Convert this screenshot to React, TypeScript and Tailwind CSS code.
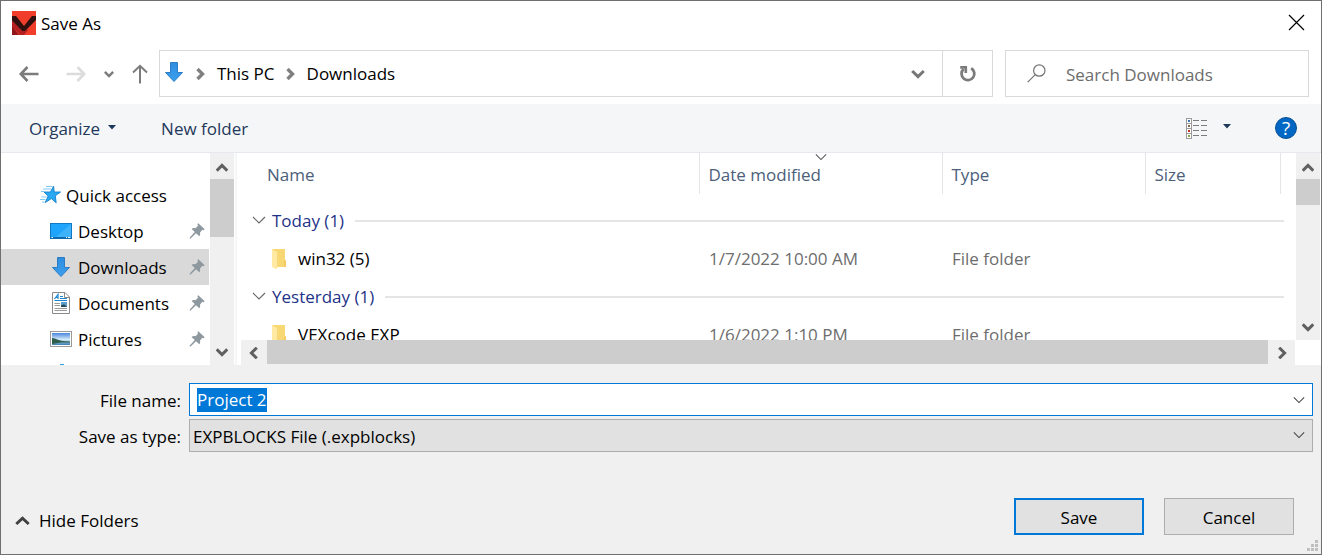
import { useEffect, useRef, type ReactNode } from "react";

type IconProps = { className?: string };

function AppLogo() {
  return (
    <svg width="24" height="24" viewBox="0 0 24 24" aria-hidden="true">
      <rect width="24" height="24" fill="#f03e2b" />
      <path d="M0 10L12 20L17 18L12 24H8L0 15Z" fill="#b3201f" />
      <path d="M0 15L7 24H0Z" fill="#8f161a" />
      <path d="M0 5H4L12 15L20 5H24V9L13 20H10.5L0 9.5Z" fill="#2f100e" />
    </svg>
  );
}

function DownArrow({ className }: IconProps) {
  return (
    <svg className={className} width="20" height="20" viewBox="0 0 20 20" aria-hidden="true">
      <defs>
        <linearGradient id="arrowBlue" x1="0" y1="0" x2="0" y2="1">
          <stop offset="0" stopColor="#2f8de0" />
          <stop offset="1" stopColor="#3d9fee" />
        </linearGradient>
      </defs>
      <path d="M6.5 0.5H13.5V10.5H18.5L10 19.5L1.5 10.5H6.5Z" fill="url(#arrowBlue)" stroke="#2b7cc4" />
    </svg>
  );
}

function Chevron({ className }: IconProps) {
  return (
    <svg className={className} width="12" height="12" viewBox="0 0 12 12" fill="none" stroke="currentColor" aria-hidden="true">
      <path d="M1 3.5L6 8.5L11 3.5" />
    </svg>
  );
}

function ThinChevron({ className }: IconProps) {
  return (
    <svg className={className} width="14" height="8" viewBox="0 0 14 8" fill="none" stroke="currentColor" strokeWidth="1.2" aria-hidden="true">
      <path d="M1 1L7 7L13 1" />
    </svg>
  );
}

function Caret({ className }: IconProps) {
  return (
    <svg className={className} width="8" height="5" viewBox="0 0 8 5" fill="#1e395b" aria-hidden="true">
      <path d="M0 0H8L4 4.6Z" />
    </svg>
  );
}

function ArrowLeft({ className }: IconProps) {
  return (
    <svg className={className} width="20" height="16" viewBox="0 0 20 16" fill="none" stroke="currentColor" strokeWidth="2.6" aria-hidden="true">
      <path d="M8.5 1L1.8 8L8.5 15M2 8H19.5" />
    </svg>
  );
}

function Pin() {
  return (
    <svg width="16" height="16" viewBox="0 0 16 16" fill="#8d989f" aria-hidden="true">
      <path d="M9.3 0.3L15.7 6.2L14.6 7.2L13.4 6.8L11 9.5C11.4 11.2 11.1 12.4 10.3 13.3L7 10.2L1.6 15.4L0.6 15.6L0.8 14.6L5.8 9L2.6 6C3.6 5 5 4.7 6.6 5.2L9.1 2.6L8.4 1.3Z" />
    </svg>
  );
}

function StarIcon() {
  return (
    <svg width="22" height="20" viewBox="0 0 22 20" aria-hidden="true">
      <path d="M13.6 1.2L14.2 7H20.6L15.3 10.8L16.2 17.8L11.4 13.6L5.2 17.6L8.2 11L4 7H10.4Z" fill="#29a9f2" stroke="#1580cf" strokeWidth="0.9" />
      <path d="M6 1.5H12.5M3 4H11M1 6.5H4M1.5 12H6.5M0 14.5H5.5M2 17H4.5" stroke="#6cc3f4" strokeWidth="0.9" />
    </svg>
  );
}

function DesktopIcon() {
  return (
    <svg width="22" height="16" viewBox="0 0 22 16" aria-hidden="true">
      <rect x="0.5" y="0.5" width="21" height="15" fill="#1ea4fb" stroke="#0f79c4" />
      <path d="M21 1L6 14H21Z" fill="#3fb2fc" />
      <rect x="0" y="14" width="22" height="2" fill="#0e6bb0" />
      <path d="M1.5 14.5H3M16 14.5H17M18 14.5H20.5" stroke="#fff" />
    </svg>
  );
}

function DocumentIcon() {
  return (
    <svg width="18" height="22" viewBox="0 0 18 22" fill="none" aria-hidden="true">
      <path d="M0.5 0.5H13L17.5 5V21.5H0.5Z" fill="#fff" stroke="#8a8a8a" />
      <path d="M12.5 0.5V5.5H17.5" stroke="#8a8a8a" />
      <path d="M2.5 7L6 2.5V7M4 5.5H6" stroke="#1c86d1" strokeWidth="1.2" />
      <path d="M8 4.5H11M8 6.5H15M2.5 8.5H15" stroke="#1c86d1" />
      <path d="M2.5 11.5H8M2.5 13.5H8M2.5 16.5H15M2.5 18.5H15" stroke="#9a9a9a" />
      <rect x="9" y="10" width="6" height="5" fill="#5f9fce" />
      <path d="M9 15V13.5L12 12.3L15 15Z" fill="#224c56" />
    </svg>
  );
}

function PictureIcon() {
  return (
    <svg width="22" height="16" viewBox="0 0 22 16" aria-hidden="true">
      <defs>
        <linearGradient id="sky" x1="0" y1="0" x2="0" y2="1">
          <stop offset="0" stopColor="#4a86dc" />
          <stop offset="0.55" stopColor="#d7ecfa" />
          <stop offset="0.75" stopColor="#7fb2d6" />
          <stop offset="1" stopColor="#3f7fb0" />
        </linearGradient>
      </defs>
      <rect x="0.5" y="0.5" width="21" height="15" fill="#fff" stroke="#9a9a9a" />
      <rect x="2" y="2" width="18" height="12" fill="url(#sky)" />
      <path d="M2 7C6 7 8 10 15 10.2L20 10.5V11.5H11L2 13Z" fill="#2f5d4c" />
    </svg>
  );
}

function FolderIcon() {
  return (
    <svg width="14" height="21" viewBox="0 0 14 21" aria-hidden="true">
      <path d="M0.5 0H13V11H14V18H0.5Z" fill="#f8d775" />
      <path d="M0 0.5L5 3V20.5L0 18Z" fill="#ffe9a3" />
      <path d="M12 12H14V18H12Z" fill="#f3cb62" />
    </svg>
  );
}

function ViewIcon() {
  const dots = ["#3f74b5", "#8a6a4a", "#c93030", "#86ad49"];
  return (
    <svg width="22" height="21" viewBox="0 0 22 21" fill="none" aria-hidden="true">
      {dots.map((fill, i) => (
        <g key={fill}>
          <rect x="0.5" y={0.5 + i * 5} width="5" height="5" fill="#fff" stroke="#9b9b9b" />
          <rect x="2" y={2 + i * 5} width="2" height="2" fill={fill} />
          <path d={`M7 ${2.5 + i * 5}H13M15 ${2.5 + i * 5}H21`} stroke="#7d7d7d" />
        </g>
      ))}
    </svg>
  );
}

function ScrollChevron({ className }: IconProps) {
  return (
    <svg className={className} width="12" height="10" viewBox="0 0 12 10" fill="none" stroke="#606060" strokeWidth="3" aria-hidden="true">
      <path d="M0.7 7.8L6 2.4L11.3 7.8" />
    </svg>
  );
}

function VerticalScroll({ thumb }: { thumb: string }) {
  return (
    <div className="flex w-6 shrink-0 flex-col bg-[#f0f0f0]">
      <button aria-label="Scroll up" className="flex h-[26px] items-center justify-center pt-1">
        <ScrollChevron />
      </button>
      <div className={`bg-[#cdcdcd] ${thumb}`} />
      <button aria-label="Scroll down" className="mt-auto flex h-[26px] items-center justify-center">
        <ScrollChevron className="rotate-180" />
      </button>
    </div>
  );
}

const places: { name: string; icon: ReactNode; active?: boolean }[] = [
  { name: "Desktop", icon: <DesktopIcon /> },
  { name: "Downloads", icon: <DownArrow />, active: true },
  { name: "Documents", icon: <DocumentIcon /> },
  { name: "Pictures", icon: <PictureIcon /> },
];

const groups = [
  { label: "Today (1)", files: [{ name: "win32 (5)", date: "1/7/2022 10:00 AM", type: "File folder" }] },
  { label: "Yesterday (1)", files: [{ name: "VEXcode EXP", date: "1/6/2022 1:10 PM", type: "File folder" }] },
];

function Sidebar() {
  return (
    <aside className="flex w-[233px] shrink-0">
      <nav aria-label="Places" className="min-w-0 flex-1 overflow-hidden pt-6">
        <a href="#quick" className="flex h-9 items-center gap-1 pl-[39px]">
          <StarIcon />
          <span className="pt-0.5">Quick access</span>
        </a>
        {places.map((p) => (
          <a
            key={p.name}
            href={`#${p.name.toLowerCase()}`}
            className={`mr-px flex h-9 items-center pr-1 pl-[49px] ${p.active ? "bg-[#d9d9d9]" : ""}`}
          >
            <span className="flex w-[22px] justify-center">{p.icon}</span>
            <span className="flex-1 pt-0.5 pl-1.5">{p.name}</span>
            <Pin />
          </a>
        ))}
        <div className="flex pt-[7px] pl-[59px]">
          <span className="h-4 w-1 bg-[#29a0e0]" />
        </div>
      </nav>
      <VerticalScroll thumb="h-[58px]" />
    </aside>
  );
}

function FileTable() {
  return (
    <table className="w-full table-fixed border-collapse text-left">
      <colgroup>
        <col />
        <col className="w-[243px]" />
        <col className="w-[203px]" />
        <col className="w-[135px]" />
        <col className="w-4" />
      </colgroup>
      <thead>
        <tr className="h-[41px] text-[#4c607a]">
          <th className="border-r border-[#e5e5e5] pt-0.5 pl-7 font-normal">Name</th>
          <th className="relative border-r border-[#e5e5e5] pt-0.5 pl-[9px] font-normal">
            <ThinChevron className="absolute top-0 left-1/2 w-3 -translate-x-1/2 text-[#555]" />
            Date modified
          </th>
          <th className="border-r border-[#e5e5e5] pt-0.5 pl-[9px] font-normal">Type</th>
          <th className="border-r border-[#e5e5e5] pt-0.5 pl-[9px] font-normal">Size</th>
          <td />
        </tr>
      </thead>
      {groups.map((g, i) => (
        <tbody key={g.label}>
          {i === 0 && <tr className="h-2" />}
          <tr className="h-[38px]">
            <th colSpan={5} className="pr-3 pl-[13px] font-normal text-[#1e3287]">
              <div className="flex items-center">
                <ThinChevron className="mr-1.5 mb-[3px] text-[#6b6b6b]" />
                {g.label}
                <span className="ml-[11px] h-0.5 flex-1 bg-[#e5e5e5]" />
              </div>
            </th>
          </tr>
          {g.files.map((f) => (
            <tr key={f.name} className="h-[38px] text-[#6d6d6d]">
              <td className="pl-[33px] text-black">
                <div className="flex items-center gap-3">
                  <FolderIcon />
                  {f.name}
                </div>
              </td>
              <td className="pl-[10px]">{f.date}</td>
              <td className="pl-[10px]">{f.type}</td>
              <td />
              <td />
            </tr>
          ))}
        </tbody>
      ))}
    </table>
  );
}

export default function App() {
  const nameRef = useRef<HTMLInputElement>(null);

  useEffect(() => {
    nameRef.current?.focus();
    nameRef.current?.select();
  }, []);

  return (
    <div className="flex h-screen min-h-[480px] flex-col border border-[#6f6f6f] bg-white font-['Open_Sans','Noto_Sans',sans-serif] text-[17px] leading-6 text-black">
      <header className="flex h-[49px] shrink-0 items-start justify-between pr-4 pl-[11px]">
        <div className="flex items-center gap-[5px] pt-[9px]">
          <AppLogo />
          <h1 className="pt-0.5">Save As</h1>
        </div>
        <button aria-label="Close" className="pt-[13px]">
          <svg width="17" height="17" viewBox="0 0 17 17" stroke="#000" strokeWidth="1.2" aria-hidden="true">
            <path d="M1 1L16 16M16 1L1 16" />
          </svg>
        </button>
      </header>

      <div className="flex h-[54px] shrink-0 items-start pr-3 pl-[18px]">
        <div className="flex h-[47px] w-[140px] shrink-0 items-center text-[#7c7c7c]">
          <button aria-label="Back">
            <ArrowLeft />
          </button>
          <button aria-label="Forward" className="ml-[27px] text-[#dcdcdc]">
            <ArrowLeft className="rotate-180" />
          </button>
          <button aria-label="Recent locations" className="ml-[18px]">
            <Chevron className="w-[10px] stroke-3" />
          </button>
          <button aria-label="Up" className="ml-4">
            <ArrowLeft className="w-[20px] rotate-90 stroke-2" />
          </button>
        </div>
        <div className="flex h-[47px] min-w-0 flex-1 border border-[#d9d9d9]">
          <nav aria-label="Address" className="flex flex-1 items-center pl-1">
            <DownArrow className="-mt-1" />
            <Chevron className="ml-[10px] -rotate-90 stroke-[3.4] text-[#808080]" />
            <a href="#pc" className="ml-[11px]">This PC</a>
            <Chevron className="mr-[11px] ml-[9px] -rotate-90 stroke-[3.4] text-[#808080]" />
            <a href="#downloads">Downloads</a>
          </nav>
          <button aria-label="Previous locations" className="flex w-12 items-center justify-center text-[#777]">
            <svg width="14" height="10" viewBox="0 0 14 10" fill="none" stroke="currentColor" strokeWidth="3" aria-hidden="true">
              <path d="M1.2 2L7 7.6L12.8 2" />
            </svg>
          </button>
          <button aria-label="Refresh" className="flex w-[50px] items-center justify-center border-l border-[#d9d9d9]">
            <svg width="18" height="18" viewBox="0 0 18 18" fill="none" stroke="#7c7c7c" strokeWidth="2.8" aria-hidden="true">
              <path d="M12.2 3.2A6.4 6.4 0 1 1 4.6 4" />
              <path d="M1.2 2.4H6.8V8" strokeWidth="2.6" />
            </svg>
          </button>
        </div>
        <label className="ml-3 flex h-[47px] w-[304px] items-center border border-[#d9d9d9] pl-[21px]">
          <svg width="19" height="19" viewBox="0 0 19 19" fill="none" stroke="#747474" strokeWidth="1.2" className="shrink-0" aria-hidden="true">
            <circle cx="12.3" cy="6.5" r="5.7" />
            <path d="M8.3 10.6L0.7 18.2" />
          </svg>
          <input
            aria-label="Search Downloads"
            placeholder="Search Downloads"
            className="ml-5 w-full min-w-0 bg-transparent pt-0.5 outline-none placeholder:text-[#6d6d6d]"
          />
        </label>
      </div>

      <div className="flex h-[49px] shrink-0 items-center border-b border-[#e6eaef] bg-[#f5f6f7] pr-6 pl-7 text-[#1e395b]">
        <button className="flex items-center gap-2 pt-0.5">
          Organize
          <Caret className="-mt-1" />
        </button>
        <button className="ml-[45px] pt-0.5">New folder</button>
        <button aria-label="Change your view" className="ml-auto flex items-center gap-[15px]">
          <ViewIcon />
          <Caret className="-mt-1" />
        </button>
        <button aria-label="Help" className="ml-11 flex size-[22px] items-center justify-center rounded-full border border-[#0a4f94] bg-[#0067c5] text-[19px] text-white">
          ?
        </button>
      </div>

      <main className="flex min-h-0 flex-1">
        <Sidebar />
        <div className="mr-[3px] ml-px w-0.5 shrink-0 bg-[#f5f6f7]" />
        <section className="flex min-w-0 flex-1 flex-col">
          <div className="flex min-h-0 flex-1">
            <div className="-ml-px min-w-0 flex-1 overflow-hidden">
              <FileTable />
            </div>
            <VerticalScroll thumb="h-[26px]" />
            <div className="w-px" />
          </div>
          <div className="mr-[26px] ml-px flex h-[25px] shrink-0 bg-[#f0f0f0]">
            <button aria-label="Scroll left" className="flex w-[26px] items-center justify-center">
              <ScrollChevron className="-rotate-90" />
            </button>
            <div className="h-6 flex-1 bg-[#cdcdcd]" />
            <button aria-label="Scroll right" className="flex w-[27px] items-center justify-center">
              <ScrollChevron className="rotate-90" />
            </button>
          </div>
        </section>
      </main>

      <footer className="shrink-0 bg-[#f0f0f0] pt-[18px]">
        <div className="grid grid-cols-[180px_1fr] gap-x-2 gap-y-[3px] pr-2">
          <label htmlFor="file-name" className="self-center pt-0.5 text-right">File name:</label>
          <div className="flex h-[33px] items-center border border-[#0078d7] bg-white pr-[7px] pl-[7px]">
            <input
              id="file-name"
              ref={nameRef}
              defaultValue="Project 2"
              className="h-6 min-w-0 flex-1 bg-transparent outline-none selection:bg-[#0078d7] selection:text-white"
            />
            <button aria-label="Show file names">
              <ThinChevron className="w-3 text-[#444]" />
            </button>
          </div>
          <label htmlFor="file-type" className="self-center pt-0.5 text-right">Save as type:</label>
          <div className="relative">
            <select id="file-type" className="block h-[33px] w-full appearance-none border border-[#adadad] bg-[#e1e1e1] pt-0.5 pl-[3px]">
              <option>EXPBLOCKS File (.expblocks)</option>
            </select>
            <ThinChevron className="pointer-events-none absolute top-3 right-2 w-3 text-[#444]" />
          </div>
        </div>
        <div className="flex items-center pt-[46px] pr-[15px] pl-[14px]">
          <button className="mr-auto flex items-center gap-[9px] pt-2">
            <svg width="15" height="10" viewBox="0 0 15 10" fill="none" stroke="#404040" strokeWidth="3" aria-hidden="true">
              <path d="M1.3 8L7.5 2.2L13.7 8" />
            </svg>
            Hide Folders
          </button>
          <button className="mr-5 h-[37px] w-[130px] border-2 border-[#0078d7] bg-[#e1e1e1] pt-0.5">Save</button>
          <button className="mr-3 h-[37px] w-[130px] border border-[#adadad] bg-[#e1e1e1] pt-0.5">Cancel</button>
        </div>
        <div className="flex h-[19px] items-end justify-end pr-[3px] pb-[3px]">
          <svg width="11" height="11" viewBox="0 0 11 11" fill="#bfbfbf" aria-hidden="true">
            <path d="M8 0h3v3h-3zM4 4h3v3h-3zM8 4h3v3h-3zM0 8h3v3h-3zM4 8h3v3h-3zM8 8h3v3h-3z" />
          </svg>
        </div>
      </footer>
    </div>
  );
}
